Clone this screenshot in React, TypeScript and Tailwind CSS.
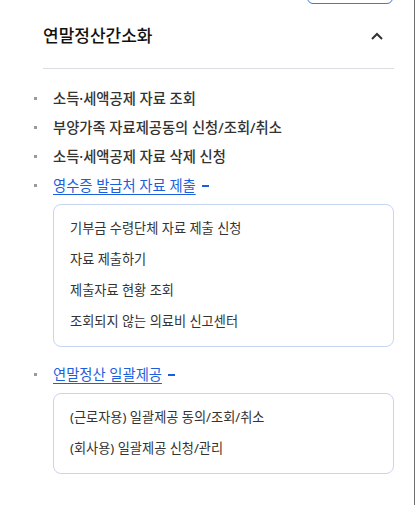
const LINKS = [
  '소득·세액공제 자료 조회',
  '부양가족 자료제공동의 신청/조회/취소',
  '소득·세액공제 자료 삭제 신청',
];

const SUBMIT = [
  '기부금 수령단체 자료 제출 신청',
  '자료 제출하기',
  '제출자료 현황 조회',
  '조회되지 않는 의료비 신고센터',
];

const BULK = ['(근로자용) 일괄제공 동의/조회/취소', '(회사용) 일괄제공 신청/관리'];

function Bullet() {
  return <span className="absolute left-[-19px] top-[13px] w-[3px] h-[3px] bg-[#9a9a9a]" />;
}

function OpenGroup({ title, items }: { title: string; items: string[] }) {
  return (
    <li className="relative">
      <Bullet />
      <div className="flex items-center h-[29px]">
        <a href="#" className="text-[#1b5fdd] underline underline-offset-[3px]">{title}</a>
        <span className="ml-[6px] w-[7px] h-[2px] bg-[#1b5fdd]" />
      </div>
      <ul className="mt-[4px] mb-[13px] border border-[#c6d5f1] rounded-[8px] px-[16px] pt-[8px] pb-[9px]">
        {items.map(t => (
          <li key={t} className="h-[31px] flex items-center text-[13.2px] font-normal text-[#333]">{t}</li>
        ))}
      </ul>
    </li>
  );
}

export default function App() {
  return (
    <div
      className="w-[415px] h-[505px] bg-white border-r border-[#6e6e6e] overflow-hidden"
      style={{ fontFamily: '"Noto Sans", "Noto Sans CJK KR", sans-serif' }}
    >
      <div className="flex justify-end pr-[21px]">
        <div className="mt-[-30px] w-[86px] h-[34px] border-[1.5px] border-[#3b78e0] rounded-[6px]" />
      </div>

      <div className="pl-[43px] pr-[20px]">
        {/* Header */}
        <div className="flex items-center justify-between mt-[19px] pb-[20px] border-b border-[#dcdde3]">
          <h2 className="text-[17px] leading-[25px] font-medium text-[#111]">연말정산간소화</h2>
          <svg width="12" height="8" viewBox="0 0 12 8" className="mr-[11px] mt-[1px]" fill="none">
            <path d="M1 7 L6 2 L11 7" stroke="#333" strokeWidth="2" />
          </svg>
        </div>

        {/* Menu */}
        <ul className="pl-[10px] pt-[15px] text-[14.3px] text-[#333]">
          {LINKS.map(t => (
            <li key={t} className="relative h-[29px] flex items-center font-medium">
              <Bullet />
              {t}
            </li>
          ))}
          <OpenGroup title="영수증 발급처 자료 제출" items={SUBMIT} />
          <OpenGroup title="연말정산 일괄제공" items={BULK} />
        </ul>
      </div>
    </div>
  );
}
